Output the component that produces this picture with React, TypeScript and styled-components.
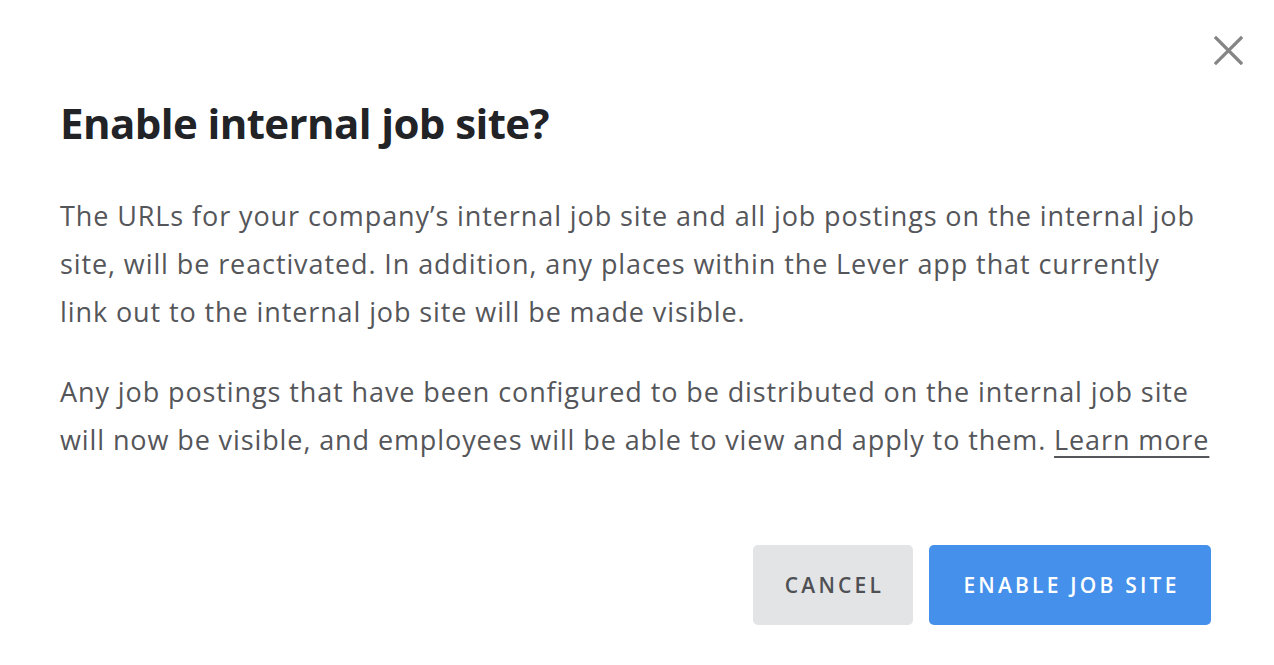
import React from "react";
import styled, { createGlobalStyle } from "styled-components";

const Global = createGlobalStyle`
  html, body { margin: 0; padding: 0; background: #ffffff; }
  body { font-family: "Open Sans", "Noto Sans", sans-serif; }
`;

const Dialog = styled.div`
  position: relative;
  width: 1274px;
  height: 665px;
  box-sizing: border-box;
  padding: 94px 63px 0 60px;
  background: #ffffff;
  display: flex;
  flex-direction: column;
`;

const CloseButton = styled.button`
  position: absolute;
  top: 36px;
  right: 31px;
  width: 29px;
  height: 29px;
  padding: 0;
  border: none;
  background: transparent;
  cursor: pointer;
  display: flex;
  align-items: center;
  justify-content: center;
`;

const Title = styled.h1`
  margin: 0;
  font-family: "Open Sans", "Noto Sans", sans-serif;
  font-weight: 700;
  font-size: 42px;
  line-height: 58px;
  color: #222326;
  letter-spacing: -0.6px;
`;

const Body = styled.div`
  margin-top: 40px;
  display: flex;
  flex-direction: column;
  gap: 32px;
`;

const Paragraph = styled.p`
  margin: 0;
  font-size: 27px;
  line-height: 48px;
  letter-spacing: 0.9px;
  color: #55565a;
  white-space: nowrap;
`;

const Link = styled.a`
  color: #55565a;
  text-decoration: underline;
  text-underline-offset: 6px;
  text-decoration-thickness: 2px;
`;

const Actions = styled.div`
  margin-top: 81px;
  display: flex;
  justify-content: flex-end;
  gap: 16px;
`;

const Button = styled.button<{ $primary?: boolean }>`
  height: 80px;
  width: ${(p) => (p.$primary ? "282px" : "160px")};
  border: none;
  border-radius: 5px;
  padding: 0;
  font-family: "Open Sans", "Noto Sans", sans-serif;
  font-size: 21px;
  font-weight: 600;
  letter-spacing: 3.2px;
  text-indent: 3px;
  text-transform: uppercase;
  cursor: pointer;
  background: ${(p) => (p.$primary ? "#4590ea" : "#e3e4e6")};
  color: ${(p) => (p.$primary ? "#ffffff" : "#4f5054")};
`;

export default function App() {
  return (
    <>
      <Global />
      <Dialog>
        <CloseButton aria-label="Close">
          <svg width="29" height="29" viewBox="0 0 29 29">
            <path
              d="M2 2 L27 27 M27 2 L2 27"
              stroke="#858585"
              strokeWidth="3.2"
              strokeLinecap="square"
            />
          </svg>
        </CloseButton>
        <Title>Enable internal job site?</Title>
        <Body>
          <Paragraph>
            The URLs for your company’s internal job site and all job postings on the internal job
            <br />
            site, will be reactivated. In addition, any places within the Lever app that currently
            <br />
            link out to the internal job site will be made visible.
          </Paragraph>
          <Paragraph>
            Any job postings that have been configured to be distributed on the internal job site
            <br />
            will now be visible, and employees will be able to view and apply to them.{" "}
            <Link href="#">Learn more</Link>
          </Paragraph>
        </Body>
        <Actions>
          <Button>Cancel</Button>
          <Button $primary>Enable job site</Button>
        </Actions>
      </Dialog>
    </>
  );
}
